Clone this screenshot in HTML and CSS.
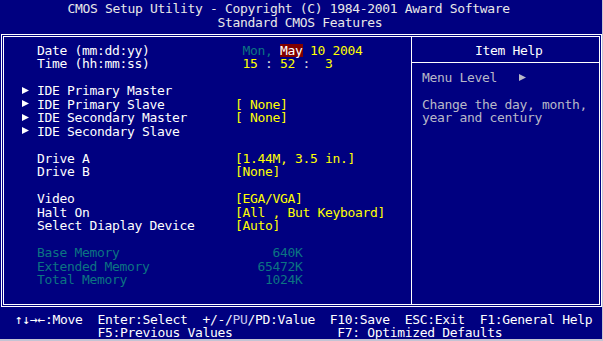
FILE: index.html
```html
<html lang="en">
<head>
    <meta charset="UTF-8">
    <title>CMOS Setup Utility</title>
    <link rel="stylesheet" href="styles.css">
</head>
<body>
    <div class="screen">
        <div class="title">
            <div class="line">         CMOS Setup Utility - Copyright (C) 1984-2001 Award Software</div>
            <div class="line">                             Standard CMOS Features</div>
        </div>

        <div class="frame">
            <div class="main">
                <div class="row"><span class="mark"></span><span class="label">Date (mm:dd:yy)</span><span class="value"> <span class="dim">Mon,</span> <span class="sel">May</span> <span class="val">10 2004</span></span></div>
                <div class="row"><span class="mark"></span><span class="label">Time (hh:mm:ss)</span><span class="value"> <span class="val">15</span> <span class="sep">:</span> <span class="val">52</span> <span class="sep">:</span>  <span class="val">3</span></span></div>
                <div class="row"></div>
                <div class="row"><span class="mark"><svg width="7" height="7" viewBox="0 0 7 7"><polygon points="0,0 7,3.5 0,7" fill="#fff"/></svg></span><span class="label">IDE Primary Master</span><span class="value"></span></div>
                <div class="row"><span class="mark"><svg width="7" height="7" viewBox="0 0 7 7"><polygon points="0,0 7,3.5 0,7" fill="#fff"/></svg></span><span class="label">IDE Primary Slave</span><span class="value val">[ None]</span></div>
                <div class="row"><span class="mark"><svg width="7" height="7" viewBox="0 0 7 7"><polygon points="0,0 7,3.5 0,7" fill="#fff"/></svg></span><span class="label">IDE Secondary Master</span><span class="value val">[ None]</span></div>
                <div class="row"><span class="mark"><svg width="7" height="7" viewBox="0 0 7 7"><polygon points="0,0 7,3.5 0,7" fill="#fff"/></svg></span><span class="label">IDE Secondary Slave</span><span class="value"></span></div>
                <div class="row"></div>
                <div class="row"><span class="mark"></span><span class="label">Drive A</span><span class="value val">[1.44M, 3.5 in.]</span></div>
                <div class="row"><span class="mark"></span><span class="label">Drive B</span><span class="value val">[None]</span></div>
                <div class="row"></div>
                <div class="row"><span class="mark"></span><span class="label">Video</span><span class="value val">[EGA/VGA]</span></div>
                <div class="row"><span class="mark"></span><span class="label">Halt On</span><span class="value val">[All , But Keyboard]</span></div>
                <div class="row"><span class="mark"></span><span class="label">Select Diaplay Device</span><span class="value val">[Auto]</span></div>
                <div class="row"></div>
                <div class="row"><span class="mark"></span><span class="label dim">Base Memory</span><span class="value dim">     640K</span></div>
                <div class="row"><span class="mark"></span><span class="label dim">Extended Memory</span><span class="value dim">   65472K</span></div>
                <div class="row"><span class="mark"></span><span class="label dim">Total Memory</span><span class="value dim">    1024K</span></div>
            </div>

            <div class="help">
                <div class="help-head">Item Help</div>
                <div class="help-body">
                    <div class="hline">Menu Level   <svg class="hmark" width="7" height="7" viewBox="0 0 7 7"><polygon points="0,0 7,3.5 0,7" fill="#b8b8c8"/></svg></div>
                    <div class="hline"></div>
                    <div class="hline">Change the day, month,</div>
                    <div class="hline">year and century</div>
                </div>
            </div>
        </div>

        <div class="footer">
            <div class="line">↑↓→←:Move  Enter:Select  +/-/<span class="soft">PU</span>/PD:Value  F10:Save  ESC:Exit  F1:General Help</div>
            <div class="line">           F5:Previous Values              F7: Optimized Defaults</div>
        </div>
    </div>
</body>
</html>
```

FILE: styles.css
```css
*{margin:0;padding:0;box-sizing:border-box;}
html{background:#c4c4d4;}
body{margin:0;font-family:"DejaVu Sans Mono","Liberation Mono",monospace;font-size:13px;letter-spacing:-0.33px;line-height:13.5px;color:#fff;}

.screen{width:602px;height:339px;background:#000080;overflow:hidden;}

.title{height:34px;padding-top:2px;color:#e8e8e8;}
.line{white-space:pre;height:13.5px;}

.frame{display:flex;width:601px;height:273px;margin-left:1px;border:3px double #fff;}

.main{flex:0 0 407px;padding:6.75px 0 0 18px;}
.row{display:grid;grid-template-columns:15px 198px 1fr;height:13.5px;white-space:pre;}
.row .mark{display:block;}
.row .mark svg{display:block;margin-top:2.5px;}
.label{color:#fff;}
.val{color:#ffff00;}
.dim{color:#0c7482;}
.sep{color:#e0e0e0;}
.sel{display:inline-block;height:13px;background:#800000;color:#fff;}

.help{flex:1;border-left:1px solid #fff;color:#b8b8c8;}
.help-head{height:26px;padding:6.75px 0 0 63px;border-bottom:1px solid #fff;color:#fff;}
.help-body{padding:7.75px 0 0 10px;}
.hline{height:13.5px;white-space:pre;}
.hmark{vertical-align:top;margin-top:3px;}

.footer{padding:5.75px 0 0 15px;color:#fff;}
.footer .soft{color:#c8c8f0;}
```
